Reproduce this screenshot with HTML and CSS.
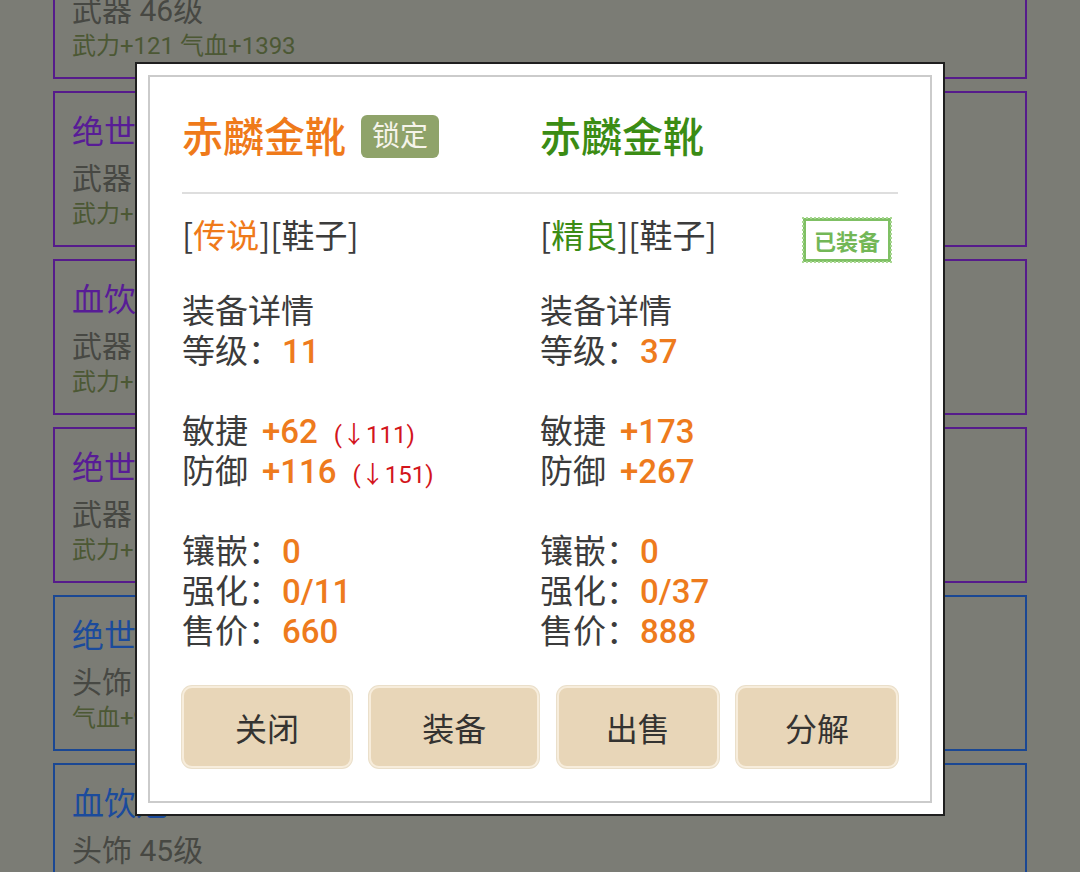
FILE: index.html
```html
<!DOCTYPE html>
<html lang="zh-CN">
<head>
    <meta charset="UTF-8">
    <meta name="viewport" content="width=device-width, initial-scale=1.0">
    <title>背包</title>
    <link rel="stylesheet" href="styles.css">
</head>
<body>
    <main class="bag-list">
        <div class="item-card epic">
            <div class="item-name">绝世神兵</div>
            <div class="item-info">武器 46级</div>
            <div class="item-stats">武力+121 气血+1393</div>
        </div>
        <div class="item-card epic">
            <div class="item-name">绝世战刃</div>
            <div class="item-info">武器 45级</div>
            <div class="item-stats">武力+118 气血+1350</div>
        </div>
        <div class="item-card epic">
            <div class="item-name">血饮刀</div>
            <div class="item-info">武器 45级</div>
            <div class="item-stats">武力+116 气血+1322</div>
        </div>
        <div class="item-card epic">
            <div class="item-name">绝世长枪</div>
            <div class="item-info">武器 44级</div>
            <div class="item-stats">武力+112 气血+1290</div>
        </div>
        <div class="item-card rare">
            <div class="item-name">绝世头冠</div>
            <div class="item-info">头饰 45级</div>
            <div class="item-stats">气血+980 防御+86</div>
        </div>
        <div class="item-card rare">
            <div class="item-name">血饮冠</div>
            <div class="item-info">头饰 45级</div>
            <div class="item-stats">气血+960 防御+82</div>
        </div>
    </main>

    <div class="modal">
        <div class="sheet">
            <div class="compare">
                <div class="col">
                    <div class="col-head">
                        <h2 class="item-title legend">赤麟金靴</h2>
                        <span class="lock">锁定</span>
                    </div>
                    <div class="tag-line">
                        <span>[<span class="legend">传说</span>][鞋子]</span>
                    </div>
                    <div class="blank"></div>
                    <div class="row">装备详情</div>
                    <div class="row">等级：<span class="val">11</span></div>
                    <div class="blank"></div>
                    <div class="row stat">敏捷<span class="val">+62</span><span class="diff">(↓111)</span></div>
                    <div class="row stat">防御<span class="val">+116</span><span class="diff">(↓151)</span></div>
                    <div class="blank"></div>
                    <div class="row">镶嵌：<span class="val">0</span></div>
                    <div class="row">强化：<span class="val">0/11</span></div>
                    <div class="row">售价：<span class="val">660</span></div>
                </div>
                <div class="col">
                    <div class="col-head">
                        <h2 class="item-title good">赤麟金靴</h2>
                    </div>
                    <div class="tag-line">
                        <span>[<span class="good">精良</span>][鞋子]</span>
                        <span class="stamp">已装备</span>
                    </div>
                    <div class="blank"></div>
                    <div class="row">装备详情</div>
                    <div class="row">等级：<span class="val">37</span></div>
                    <div class="blank"></div>
                    <div class="row stat">敏捷<span class="val">+173</span></div>
                    <div class="row stat">防御<span class="val">+267</span></div>
                    <div class="blank"></div>
                    <div class="row">镶嵌：<span class="val">0</span></div>
                    <div class="row">强化：<span class="val">0/37</span></div>
                    <div class="row">售价：<span class="val">888</span></div>
                </div>
            </div>
            <div class="actions">
                <button class="btn wide">关闭</button>
                <button class="btn wide">装备</button>
                <button class="btn">出售</button>
                <button class="btn">分解</button>
            </div>
        </div>
    </div>
</body>
</html>
```

FILE: styles.css
```css
body {
    margin: 0;
    padding: 0;
    background-color: #7b7c75;
    font-family: Roboto, "Noto Sans CJK SC", sans-serif;
    overflow: hidden;
    height: 872px;
}

/* backpack list behind the dialog */
.bag-list {
    display: flex;
    flex-direction: column;
    gap: 12px;
    padding: 0 53px;
    margin-top: -77px;
}

.item-card {
    box-sizing: border-box;
    height: 156px;
    border: 2px solid #561b8b;
    padding: 18px 17px 0;
}

.item-card.rare {
    border-color: #1a4793;
}

.item-name {
    font-size: 32px;
    line-height: 42px;
    color: #581c96;
}

.rare .item-name {
    color: #1b4b9c;
}

.item-info {
    margin-top: 6px;
    font-size: 30px;
    line-height: 40px;
    color: #474843;
}

.item-stats {
    font-size: 24px;
    line-height: 30px;
    color: #4c5834;
}

/* compare dialog */
.modal {
    position: fixed;
    top: 62px;
    left: 135px;
    width: 810px;
    box-sizing: border-box;
    background: #fff;
    border: 2px solid #1f1f1f;
    padding: 11px;
}

.sheet {
    border: 2px solid #cbcbcb;
    padding: 37px 32px 33px;
}

.compare {
    display: grid;
    grid-template-columns: 1fr 1fr;
}

.col {
    font-size: 33px;
    line-height: 40px;
    color: #3c3c3c;
}

.col-head {
    display: flex;
    align-items: center;
    height: 48px;
    padding-bottom: 30px;
    border-bottom: 2px solid #dedede;
    margin-bottom: 18px;
}

.item-title {
    margin: 0;
    font-size: 41px;
    line-height: 48px;
    font-weight: 500;
}

.legend {
    color: #ef7a1a;
}

.good {
    color: #3b8c14;
}

.lock {
    margin-left: 15px;
    padding: 0 11px;
    background: #8fa36a;
    color: #f6f4ea;
    border-radius: 6px;
    font-size: 28px;
    line-height: 43px;
    position: relative;
    top: -2px;
}

.tag-line {
    box-sizing: border-box;
    display: flex;
    justify-content: space-between;
    align-items: flex-start;
    height: 40px;
    padding-top: 2px;
    font-family: "Noto Sans CJK SC", sans-serif;
}

.stamp {
    margin: 4px 7px 0 0;
    padding: 3px 8px;
    border: 3px solid #7fc064;
    outline: 2px dotted #a9d893;
    outline-offset: -1px;
    color: #73b757;
    font-size: 22px;
    line-height: 32px;
    font-weight: bold;
}

.row {
    height: 40px;
    white-space: nowrap;
}

.blank {
    height: 40px;
}

.val {
    margin-left: 1px;
    color: #ee7b1d;
    font-weight: 500;
}

.stat .val {
    margin-left: 14px;
}

.diff {
    margin-left: 16px;
    font-size: 24px;
    color: #d3151c;
}

.actions {
    display: grid;
    grid-template-columns: 170px 170px 162px 162px;
    justify-content: space-between;
    margin-top: 34px;
}

.btn {
    height: 82px;
    background: #e8d6b8;
    border: 2px solid #f7eddc;
    border-radius: 10px;
    box-shadow: 0 0 0 1px #eadfca;
    font-family: inherit;
    font-size: 32px;
    color: #343331;
    cursor: pointer;
}
```
